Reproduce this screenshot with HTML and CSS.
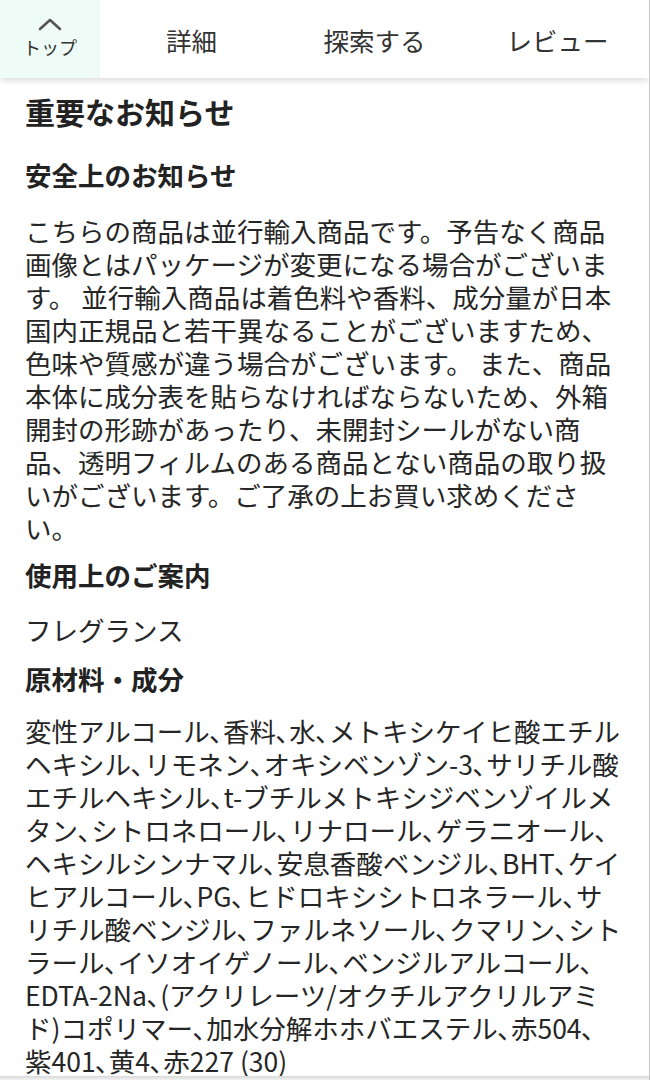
FILE: index.html
```html
<!DOCTYPE html>
<html lang="ja">
<head>
<meta charset="utf-8">
<link rel="stylesheet" href="styles.css">
</head>
<body>
<div class="page">
  <header class="tabs">
    <div class="tab tab-top">
      <svg class="chev" width="24" height="14" viewBox="0 0 24 14"><polyline points="2,12 12,3 22,12" fill="none" stroke="#555" stroke-width="2.6" stroke-linecap="round" stroke-linejoin="round"/></svg>
      <span class="top-label">トップ</span>
    </div>
    <div class="tab">詳細</div>
    <div class="tab">探索する</div>
    <div class="tab">レビュー</div>
  </header>
  <main class="content">
    <h1 class="title">重要なお知らせ</h1>
    <h2 class="sub">安全上のお知らせ</h2>
    <p class="text">こちらの商品は並行輸入商品です。予告なく商品<br>画像とはパッケージが変更になる場合がございま<br>す。 並行輸入商品は着色料や香料、成分量が日本<br>国内正規品と若干異なることがございますため、<br>色味や質感が違う場合がございます。 また、商品<br>本体に成分表を貼らなければならないため、外箱<br>開封の形跡があったり、未開封シールがない商<br>品、透明フィルムのある商品とない商品の取り扱<br>いがございます。ご了承の上お買い求めくださ<br>い。</p>
    <h2 class="sub sub-use">使用上のご案内</h2>
    <p class="text single">フレグランス</p>
    <h2 class="sub sub-ingr">原材料・成分</h2>
    <p class="text ingr">変性アルコール､香料､水､メトキシケイヒ酸エチル<br>ヘキシル､リモネン､オキシベンゾン-3､サリチル酸<br>エチルヘキシル､t-ブチルメトキシジベンゾイルメ<br>タン､シトロネロール､リナロール､ゲラニオール､<br>ヘキシルシンナマル､安息香酸ベンジル､BHT､ケイ<br>ヒアルコール､PG､ヒドロキシシトロネラール､サ<br>リチル酸ベンジル､ファルネソール､クマリン､シト<br>ラール､イソオイゲノール､ベンジルアルコール､<br>EDTA-2Na､(アクリレーツ/オクチルアクリルアミ<br>ド)コポリマー､加水分解ホホバエステル､赤504､<br>紫401､黄4､赤227 (30)</p>
  </main>
  <div class="bottom-edge"></div>
</div>
</body>
</html>
```

FILE: styles.css
```css
* { box-sizing: border-box; }
html, body { margin: 0; padding: 0; background: #fff; }
body {
  font-family: "Noto Sans CJK JP", "Noto Sans", sans-serif;
  color: #262626;
}
.page {
  width: 650px;
  height: 1080px;
  overflow: hidden;
  border-right: 1px solid #c8c8c8;
  position: relative;
}
.tabs {
  display: grid;
  grid-template-columns: 100px 1fr 1fr 1fr;
  height: 78px;
  background: #fff;
  box-shadow: 0 3px 6px rgba(0,0,0,0.13);
  position: relative;
  z-index: 2;
}
.tab {
  display: flex;
  align-items: center;
  justify-content: center;
  font-size: 25.5px;
  color: #333;
}
.tab-top {
  background: #effbf7;
  flex-direction: column;
  padding: 17px 0 0;
  justify-content: flex-start;
}
.chev { display: block; }
.top-label {
  font-size: 18px;
  line-height: 24px;
  color: #333;
  margin-top: 4px;
}
.content {
  padding: 13px 30px 0 25px;
}
.title {
  margin: 0 0 27px;
  font-size: 30px;
  font-weight: 700;
  line-height: 40px;
  color: #222;
}
.sub {
  margin: 0 0 22px;
  font-size: 26.5px;
  font-weight: 700;
  line-height: 34px;
  color: #222;
}
.sub-use { margin-bottom: 21px; }
.sub-ingr { margin-bottom: 18px; }
.text {
  margin: 0 0 14px;
  font-size: 26.5px;
  line-height: 33px;
  white-space: nowrap;
}
.text.single { margin-bottom: 16px; }
.bottom-edge {
  position: absolute;
  left: 0;
  right: 0;
  bottom: 0;
  height: 4px;
  background: linear-gradient(#d8d8d8, #f2f2f2);
}
```
